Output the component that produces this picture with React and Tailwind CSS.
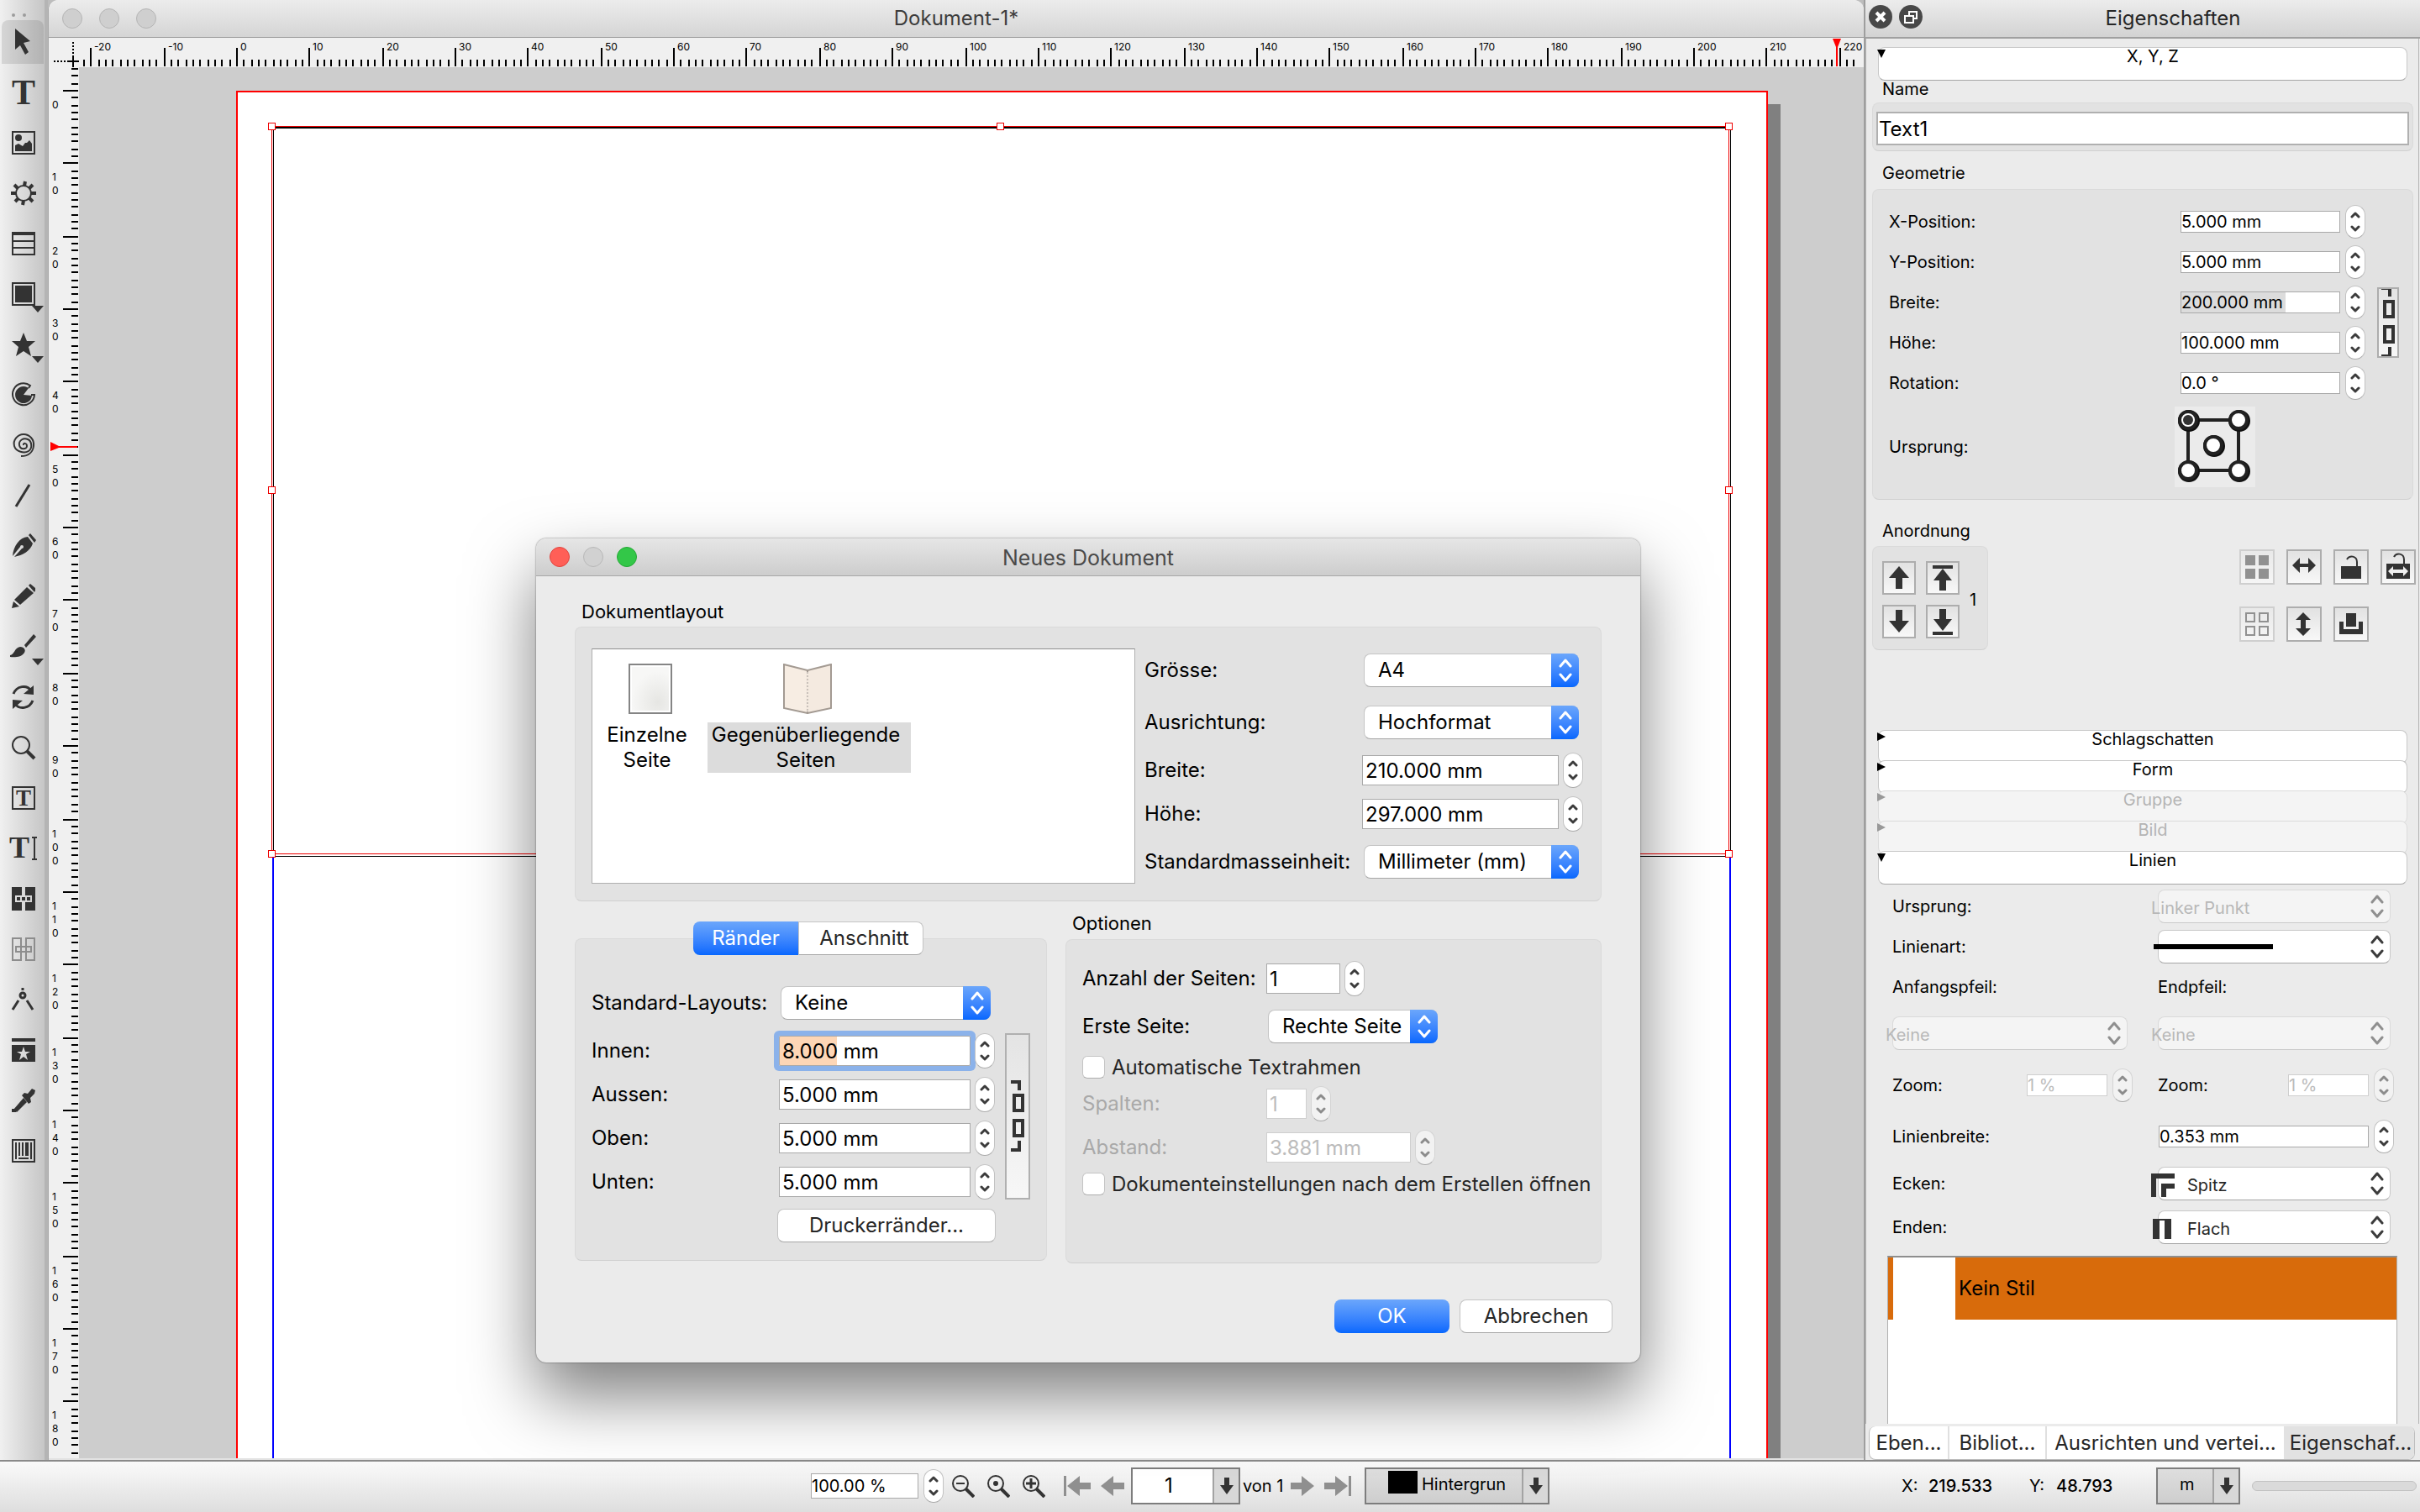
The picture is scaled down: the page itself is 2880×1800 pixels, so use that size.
import { useId, useState } from 'react';

// Pixels per millimetre on the canvas and the rulers.
const MM = 8.67;
const ORIGIN_X = 188;
const ORIGIN_Y = 28;

const snap = (v) => Math.round(v / 2) * 2;

const INK = '#333';

/* ---------- small controls ---------- */

const Chevrons = ({ className = '', tall = false }) => (
  <svg
    viewBox={tall ? '0 0 16 32' : '0 0 12 30'}
    className={`${tall ? 'w-4 h-8' : 'w-3 h-[30px]'} ${className}`}
    fill="none"
    stroke="currentColor"
    strokeWidth="3"
    strokeLinecap="round"
    strokeLinejoin="round"
  >
    {tall ? <path d="M2 11 8 4l6 7M2 21l6 7 6-7" /> : <path d="M2 9l4-4 4 4M2 21l4 4 4-4" />}
  </svg>
);

const Stepper = ({ label, disabled, small }) => (
  <span
    className={`relative shrink-0 flex flex-col w-6 rounded-xl border border-[#c2c2c2] border-b-[#a8a8a8] ${
      small ? 'h-10' : 'h-[42px]'
    } ${disabled ? 'bg-[#f2f2f2] text-[#8c8c8c] border-[#d4d4d4]' : 'bg-white text-[#3c3c3c]'}`}
  >
    <button type="button" disabled={disabled} aria-label={`${label} erhöhen`} className="flex-1" />
    <button type="button" disabled={disabled} aria-label={`${label} verringern`} className="flex-1" />
    <Chevrons className="absolute inset-0 m-auto pointer-events-none" />
  </span>
);

const NumberField = ({ id, label, value, width, disabled, small, className = '' }) => {
  const [text, setText] = useState(value);
  return (
    <span className={`flex items-center ${small ? 'gap-[6px]' : 'gap-[5px]'}`}>
      <input
        id={id}
        aria-label={id ? undefined : label}
        value={text}
        onChange={(e) => setText(e.target.value)}
        disabled={disabled}
        className={`min-w-0 border outline-none ${width} ${
          small ? 'h-[26px] text-xl leading-6 px-0' : 'h-9 text-2xl leading-8 px-[3px]'
        } ${disabled ? 'border-[#cfcfcf] text-[#bcbcbc]' : 'border-[#a9a9a9] text-black'} ${className || 'bg-white'}`}
      />
      <Stepper label={label} disabled={disabled} small={small} />
    </span>
  );
};

const BlueSelect = ({ id, width, children }) => (
  <span className={`relative flex h-10 ml-[2px] ${width}`}>
    <select
      id={id}
      className="appearance-none w-full rounded-lg border border-[#c4c4c4] border-b-[#a6a6a6] bg-white pl-4 pr-9 text-2xl leading-8 text-black outline-none"
    >
      <option>{children}</option>
    </select>
    <span className="absolute right-0 inset-y-0 w-[33px] rounded-r-lg bg-linear-to-b from-[#6ba6fb] to-[#0567fe] flex items-center justify-center text-white pointer-events-none">
      <Chevrons tall />
    </span>
  </span>
);

// The palette selects start their text a little left of the box.
const PaletteSelect = ({ id, label, disabled, icon, children }) => (
  <span className="relative flex-1 flex h-10">
    <span
      className={`absolute inset-y-0 right-0 left-2 rounded-lg border ${
        disabled ? 'bg-[#f4f4f4] border-[#dadada] border-b-[#cacaca]' : 'bg-white border-[#c8c8c8] border-b-[#a6a6a6]'
      }`}
    />
    {icon && <span className="absolute left-0 inset-y-0 flex items-center">{icon}</span>}
    <select
      id={id}
      aria-label={id ? undefined : label}
      disabled={disabled}
      className={`relative appearance-none w-full bg-transparent text-xl leading-6 pt-1 outline-none opacity-100 ${
        icon ? 'pl-[43px]' : 'pl-0'
      } ${disabled ? 'text-[#b8b8b8]' : 'text-[#262626]'}`}
    >
      <option>{children}</option>
    </select>
    <Chevrons
      tall
      className={`absolute right-2 inset-y-0 my-auto pointer-events-none ${disabled ? 'text-[#8f8f8f]' : 'text-[#3c3c3c]'}`}
    />
  </span>
);

const Group = ({ className = '', children }) => (
  <div className={`rounded-lg border border-[#dadada] border-b-[#d0d0d0] bg-[#e2e2e2] ${className}`}>{children}</div>
);

const ChainIcon = ({ className }) => (
  <svg viewBox="0 0 18 86" className={className} fill={INK}>
    <path d="M1 0h12v12H9V4H1z" />
    <path fillRule="evenodd" d="M3 16h14v22H3zM7 20v14h6V20z" />
    <path fillRule="evenodd" d="M3 46h14v22H3zM7 50v14h6V50z" />
    <path d="M9 72h4v13H1v-4h8z" />
  </svg>
);

/* ---------- tool bar ---------- */

const starPath = 'M14 0l4 10h10l-8 7 3 11-9-6-9 6 3-11-8-7h10z';

const TOOLS = [
  { name: 'Objekt auswählen', active: true, art: <path fill={INK} d="M4-2l18 15-8 2 6 11-4 3-6-11-6 5z" /> },
  { name: 'Textrahmen', art: <text x="14" y="28" textAnchor="middle" fontSize="42" fontWeight="bold" fill={INK} fontFamily="Liberation Serif, serif">T</text> },
  {
    name: 'Bildrahmen',
    art: (
      <g fill={INK}>
        <rect x="1" y="1" width="26" height="26" fill="none" stroke={INK} strokeWidth="2" />
        <circle cx="8" cy="8" r="4" />
        <path d="M4 24v-7l4-2 5 3 3-4h2l3-3 3 4v9z" />
      </g>
    ),
  },
  {
    name: 'Renderrahmen',
    art: (
      <g stroke={INK} fill="none" strokeWidth="2">
        <circle cx="14" cy="14" r="9" />
        <path strokeWidth="4" d="M15 5l1-5M14 23l-1 5M5 14H-1M23 14h6M7 8L3 4M21 20l4 4M21 8l4-4M8 20l-4 4" />
      </g>
    ),
  },
  {
    name: 'Tabelle',
    art: (
      <g stroke={INK} fill="none" strokeWidth="2">
        <path d="M1 2v25h26V2M1 11h26M1 19h26" />
        <path strokeWidth="4" d="M0 2h28" />
      </g>
    ),
  },
  {
    name: 'Form',
    menu: true,
    art: (
      <g fill={INK}>
        <rect x="1" y="1" width="26" height="26" fill="none" stroke={INK} strokeWidth="2" />
        <rect x="4" y="4" width="20" height="20" />
      </g>
    ),
  },
  { name: 'Polygon', menu: true, art: <path fill={INK} d={starPath} /> },
  {
    name: 'Bogen',
    art: (
      <g>
        <path fill={INK} d="M14 14L20 6A10 10 0 1 0 24 15z" />
        <path fill="none" stroke={INK} strokeWidth="2" d="M20 6L22 3A13 13 0 1 0 27 14h-4" />
      </g>
    ),
  },
  {
    name: 'Spirale',
    art: <path fill="none" stroke={INK} strokeWidth="2" d="M14 14c-1-3 4-3 4 1s-8 5-9-1 5-9 10-7 6 11 1 14-15 1-17-6S7 1 14 1s13 6 12 14-7 12-15 12" />,
  },
  { name: 'Linie', art: <path stroke={INK} strokeWidth="3" d="M5 27L21 1" /> },
  {
    name: 'Bézierkurve',
    art: (
      <g fill={INK}>
        <path fillRule="evenodd" d="M1 26C2 14 9 4 19 3l6 8c-3 9-12 14-22 16l9-10a2 2 0 1 0-2-2z" />
        <path d="M20 1l2-2 7 8-2 3z" />
      </g>
    ),
  },
  {
    name: 'Freihandlinie',
    art: (
      <g fill={INK}>
        <path d="M3 18L18 3l8 7-16 14z" />
        <path d="M0 28l2-8 7 6zM20 1l2-2 6 5v3l-1 2z" />
      </g>
    ),
  },
  {
    name: 'Kalligrafielinie',
    menu: true,
    art: (
      <g fill={INK}>
        <path d="M-2 24c5 0 5-9 12-10 5 0 7 4 5 7-3 5-11 6-17 5z" />
        <path d="M15 12L26-1l3 3-12 13z" />
      </g>
    ),
  },
  {
    name: 'Objekt drehen',
    art: (
      <g fill="none" stroke={INK} strokeWidth="3">
        <path d="M2 10C6 0 18-1 23 6M25 18C21 28 9 29 4 22" />
        <path fill={INK} stroke="none" d="M26 0v11l-12-1zM1 28V17l12 1z" />
      </g>
    ),
  },
  {
    name: 'Zoom',
    art: (
      <g fill="none" stroke={INK} strokeWidth="2">
        <circle cx="11" cy="11" r="10" />
        <path strokeWidth="4" d="M18 18l9 9" />
      </g>
    ),
  },
  {
    name: 'Textrahmen bearbeiten',
    art: (
      <g>
        <rect x="1" y="1" width="26" height="26" fill="none" stroke={INK} strokeWidth="2" />
        <text x="14" y="23" textAnchor="middle" fontSize="27" fontWeight="bold" fill={INK} fontFamily="Liberation Serif, serif">T</text>
      </g>
    ),
  },
  {
    name: 'Text mit Texteditor bearbeiten',
    art: (
      <g>
        <text x="9" y="25" textAnchor="middle" fontSize="36" fontWeight="bold" fill={INK} fontFamily="Liberation Serif, serif">T</text>
        <path fill="none" stroke={INK} strokeWidth="2" d="M24 1h6M24 27h6M27 1v26" />
      </g>
    ),
  },
  {
    name: 'Textrahmen verketten',
    art: (
      <g fill={INK}>
        <path d="M0 0h12v10H4v8h8v10H0zM28 0H16v10h8v8h-8v10h12z" />
        <path d="M6 12h4v4H6zM12 12h4v4h-4zM18 12h4v4h-4z" />
      </g>
    ),
  },
  {
    name: 'Textrahmenverkettung lösen',
    art: (
      <g fill="none" stroke="#8d8d8d" strokeWidth="2">
        <rect x="1" y="1" width="10" height="26" />
        <rect x="17" y="1" width="10" height="26" />
        <rect x="5" y="11" width="18" height="6" />
      </g>
    ),
  },
  {
    name: 'Messungen',
    art: (
      <g fill="none" stroke={INK} strokeWidth="3">
        <circle cx="13" cy="9" r="3" />
        <path d="M13 0v3M8 15L1 26M18 15l7 11" />
      </g>
    ),
  },
  {
    name: 'Objekteigenschaften kopieren',
    art: (
      <g fill={INK}>
        <rect width="28" height="4" />
        <path fillRule="evenodd" d="M0 8h28v20H0zM14 10l-2 6H6l5 3-2 7 5-4 5 4-2-7 5-3h-6z" />
      </g>
    ),
  },
  {
    name: 'Pipette',
    art: (
      <g fill={INK}>
        <path d="M2 25L14 11l4 5L6 28z" />
        <path d="M12 8l3-3 4 1 5-6 4 2-1 4-5 5 1 5-3 2zM0 24h5v4H0z" />
      </g>
    ),
  },
  {
    name: 'Barcode',
    art: (
      <g fill={INK}>
        <rect x="1" y="1" width="26" height="26" fill="none" stroke={INK} strokeWidth="2" />
        <path d="M4 4h2v20H4zM8 4h2v16H8zM12 4h2v16h-2zM16 4h4v16h-4zM22 4h2v20h-2zM8 22h12v2H8z" />
      </g>
    ),
  },
];

const ToolBar = () => (
  <nav className="w-[57px] shrink-0 bg-linear-to-r from-[#f0f0f0] to-[#c6c6c6] border-r-4 border-[#b4b4b4] pr-px">
    <div className="h-6 flex items-center gap-2 pl-[14px] pt-3">
      <span className="w-1 h-1 rounded-full bg-[#9c9c9c]" />
      <span className="w-1 h-1 rounded-full bg-[#9c9c9c] ml-px" />
    </div>
    <div className="flex flex-col gap-2">
      {TOOLS.map(({ name, active, menu, art }) => (
        <button
          key={name}
          type="button"
          aria-label={name}
          className={`relative ml-[2px] h-[52px] pl-3 flex items-center ${active ? 'rounded-t-lg bg-black/10' : ''}`}
        >
          <svg viewBox="0 0 28 28" className="w-7 h-7 overflow-visible">{art}</svg>
          {menu && (
            <svg viewBox="0 0 14 8" className="absolute right-0 bottom-1 w-[14px] h-2" fill={INK}>
              <path d="M0 0h14L7 8z" />
            </svg>
          )}
        </button>
      ))}
    </div>
  </nav>
);

/* ---------- rulers and canvas ---------- */

const range = (from, to) => Array.from({ length: to - from + 1 }, (_, i) => from + i);

const RulerX = () => (
  <svg className="flex-1 min-w-0 h-[35px] bg-[#f0f0f0]" fontSize="12" fontFamily="Inter, sans-serif">
    {range(-21, 222).map((mm) => {
      const x = snap(ORIGIN_X + mm * MM);
      const major = mm % 10 === 0;
      return (
        <g key={mm}>
          <rect x={x - 1} y={major ? 12 : 26} width="2" height={major ? 22 : 8} />
          {major && <text x={x + 4} y="15">{mm}</text>}
        </g>
      );
    })}
    <path fill="red" d="M2087 1h10l-4 10v23h-2V11z" />
  </svg>
);

const RulerY = () => (
  <svg className="w-9 shrink-0 bg-[#f0f0f0]" fontSize="12" fontFamily="Inter, sans-serif">
    {range(-3, 187).map((mm) => {
      const y = snap(ORIGIN_Y + mm * MM);
      const major = mm % 10 === 0;
      return (
        <g key={mm}>
          <rect x={major ? 17 : 27} y={y - 1} width={major ? 18 : 8} height="2" />
          {major && String(mm).split('').map((d, i) => (
            <text key={i} x="4" y={y + 21 + i * 16}>{d}</text>
          ))}
        </g>
      );
    })}
    <path fill="red" d="M2 446l10 5h22v2H12l-10 4z" />
  </svg>
);

const Canvas = () => {
  const left = Math.round(ORIGIN_X + 5 * MM);
  const right = Math.round(ORIGIN_X + 205 * MM);
  const top = Math.round(ORIGIN_Y + 5 * MM) + 1;
  const bottom = Math.round(ORIGIN_Y + 105 * MM);
  const midX = Math.round((left + right) / 2);
  const midY = Math.round((top + bottom) / 2);
  const w = 210 * MM;
  const h = 297 * MM;
  const handles = [
    [left, top], [midX, top], [right, top],
    [left, midY], [right, midY],
    [left, bottom], [midX, bottom], [right, bottom],
  ];
  return (
    <div className="relative flex-1 min-w-0 bg-[#cdcdcd]">
      <svg className="absolute inset-0 w-full h-full" fill="none" shapeRendering="crispEdges">
        <rect x={ORIGIN_X + 16} y={ORIGIN_Y + 16} width={w} height={h} fill="#808080" />
        <rect x={ORIGIN_X} y={ORIGIN_Y + 1} width={w} height={h} fill="#fff" stroke="#f00" strokeWidth="2" />
        <rect x={left} y={top} width={right - left} height={h - 10 * MM} stroke="#00f" strokeWidth="2" />
        <rect x={left - 3} y={top - 3} width={right - left + 6} height={bottom - top + 6} fill="#fff" />
        <path stroke="#000" d={`M${left + 1} ${top}V${bottom + 1}H${right + 1}V${top}`} transform="translate(-.5 .5)" />
        <path stroke="#000" strokeWidth="2" d={`M${left} ${top}H${right}`} />
        <rect x={left - 2} y={top - 2} width={right - left} height={bottom - top} stroke="#e00" transform="translate(.5 .5)" />
        {handles.map(([x, y]) => (
          <rect key={`${x}-${y}`} x={x - 6} y={y - 6} width="8" height="8" fill="#fff" stroke="#e00" transform="translate(.5 .5)" />
        ))}
      </svg>
    </div>
  );
};

const DocumentWindow = () => (
  <section className="flex-1 min-w-0 flex flex-col rounded-t-xl border-l border-[#a8a8a8] bg-[#f0f0f0] overflow-hidden">
    <header className="flex items-center h-[45px] pl-4 bg-linear-to-b from-[#ececec] to-[#d5d5d5] border-b border-[#9c9c9c]">
      <span className="flex gap-5 w-32">
        {['Schliessen', 'Minimieren', 'Maximieren'].map((n) => (
          <button key={n} type="button" aria-label={n} className="w-6 h-6 rounded-full border border-[#b4b4b4] bg-[#cfcfcf]" />
        ))}
      </span>
      <h1 className="flex-1 pr-36 text-center text-2xl leading-8 text-[#3c3c3c]">Dokument-1*</h1>
    </header>
    <div className="flex">
      <svg className="w-9 h-[35px] shrink-0" fill="none" stroke="#000" strokeWidth="2">
        <path strokeDasharray="2 2" d="M29 5v18M6 28h17" />
        <path d="M29 21v14M22 28h14" />
      </svg>
      <RulerX />
    </div>
    <div className="flex-1 min-h-0 flex border-b-2 border-[#e2e2e2]">
      <RulerY />
      <Canvas />
    </div>
  </section>
);

/* ---------- dialog ---------- */

const DialogRow = ({ label, tall, disabled, labelWidth = 'w-[259px]', children }) => {
  const id = useId();
  return (
    <div className={`flex items-center ${tall ? 'h-[62px]' : 'h-[52px]'}`}>
      <label htmlFor={id} className={`shrink-0 ${labelWidth} ${disabled ? 'text-[#a9a9a9]' : ''}`}>{label}</label>
      {children(id)}
    </div>
  );
};

const MARGINS = [
  { label: 'Innen:', value: '8.000 mm', focus: true },
  { label: 'Aussen:', value: '5.000 mm' },
  { label: 'Oben:', value: '5.000 mm' },
  { label: 'Unten:', value: '5.000 mm' },
];

const Check = ({ children }) => (
  <label className="flex items-center gap-2 h-[35px] text-[#262626]">
    <input type="checkbox" className="appearance-none w-[27px] h-[27px] rounded-md border border-[#c4c4c4] border-b-[#adadad] bg-white" />
    {children}
  </label>
);

const NewDocumentDialog = () => (
  <div
    role="dialog"
    aria-label="Neues Dokument"
    className="absolute left-[638px] top-[641px] w-[1314px] rounded-xl bg-[#ebebeb] text-2xl leading-8 text-black shadow-[0_0_2px_rgba(0,0,0,0.6),0_40px_80px_rgba(0,0,0,0.5)]"
  >
    <header className="flex items-center h-[45px] px-4 rounded-t-xl border-b border-[#a8a8a8] bg-linear-to-b from-[#e6e6e6] to-[#cdcdcd]">
      <span className="flex gap-4 w-32">
        <button type="button" aria-label="Schliessen" className="w-6 h-6 rounded-full border border-[#e0443e] bg-[#ff5f57]" />
        <button type="button" aria-label="Minimieren" className="w-6 h-6 rounded-full border border-[#b8b8b8] bg-[#d1d1d1]" />
        <button type="button" aria-label="Maximieren" className="w-6 h-6 rounded-full border border-[#24a835] bg-[#33c748]" />
      </span>
      <h2 className="flex-1 pt-[2px] pr-32 text-center text-[25px] text-[#4a4a4a]">Neues Dokument</h2>
    </header>

    <div className="px-[46px] pt-[29px]">
      <h3 className="pl-2 mb-[5px] text-[22px] leading-[26px]">Dokumentlayout</h3>
      <Group className="flex gap-[11px] pl-[19px] pt-5 pb-[15px]">
        <div className="flex items-start my-[5px] w-[647px] border border-[#b0b0b0] border-t-[#8e8e8e] bg-white pt-[17px]">
          <button type="button" className="flex flex-col items-center gap-[10px] w-[130px] leading-[30px]">
            <svg viewBox="0 0 52 60" className="w-[52px] h-[60px] ml-2">
              <defs>
                <radialGradient id="paper" cx="0.7" cy="0.8" r="0.7">
                  <stop offset="0" stopColor="#e6e6e3" />
                  <stop offset="1" stopColor="#f7f7f6" />
                </radialGradient>
              </defs>
              <rect x="1" y="1" width="50" height="58" fill="#fff" stroke="#858585" strokeWidth="2" />
              <rect x="4" y="4" width="44" height="52" fill="url(#paper)" />
            </svg>
            <span>Einzelne<br />Seite</span>
          </button>
          <button type="button" className="flex flex-col items-center gap-[10px] ml-[7px] w-[242px] leading-[30px]">
            <svg viewBox="0 0 58 60" className="w-[58px] h-[60px] mr-1" stroke="#a39a92" strokeWidth="2">
              <path fill="#f7ede3" d="M1 1l28 7v51L1 53z" />
              <path fill="#f4eae0" d="M57 1L29 8v51l28-6z" />
              <path stroke="#f4eae0" strokeWidth="4" d="M29 10v47" />
              <path stroke="#c9c1ba" strokeDasharray="2 2" d="M29 10v47" />
            </svg>
            <span className="w-full pr-2 bg-[#dcdcdc]">Gegenüberliegende<br />Seiten</span>
          </button>
        </div>
        <div>
          <DialogRow label="Grösse:" tall>{(id) => <BlueSelect id={id} width="w-[256px]">A4</BlueSelect>}</DialogRow>
          <DialogRow label="Ausrichtung:" tall>{(id) => <BlueSelect id={id} width="w-[256px]">Hochformat</BlueSelect>}</DialogRow>
          <DialogRow label="Breite:">{(id) => <NumberField id={id} label="Breite" value="210.000 mm" width="w-[234px]" />}</DialogRow>
          <DialogRow label="Höhe:">{(id) => <NumberField id={id} label="Höhe" value="297.000 mm" width="w-[234px]" />}</DialogRow>
          <DialogRow label="Standardmasseinheit:" tall>{(id) => <BlueSelect id={id} width="w-[256px]">Millimeter (mm)</BlueSelect>}</DialogRow>
        </div>
      </Group>

      <div className="flex gap-[22px] pt-[13px]">
        <div className="w-[562px] pt-[11px]">
          <div role="tablist" className="relative ml-[141px] w-[274px] h-10 flex -mb-5">
            <button type="button" role="tab" aria-selected="true" className="w-[125px] rounded-l-lg bg-linear-to-b from-[#6ba6fb] to-[#0567fe] text-white">Ränder</button>
            <button type="button" role="tab" aria-selected="false" className="flex-1 pl-2 rounded-r-lg border border-[#c4c4c4] border-b-[#a6a6a6] bg-white text-[#262626]">Anschnitt</button>
          </div>
          <Group className="pl-[19px] pt-[45px] pb-[21px]">
            <DialogRow label="Standard-Layouts:" tall labelWidth="w-[223px]">
              {(id) => <BlueSelect id={id} width="w-[250px]">Keine</BlueSelect>}
            </DialogRow>
            <div className="flex items-center gap-3">
              <div>
                {MARGINS.map(({ label, value, focus }) => (
                  <DialogRow key={label} label={label} labelWidth="w-[223px]">
                    {(id) => (
                      <NumberField
                        id={id}
                        label={label.replace(':', '')}
                        value={value}
                        width="w-[228px]"
                        className={focus ? 'ring-[6px] ring-[#8bb2ea] rounded-xs bg-[linear-gradient(to_right,#fdd6b6_68px,#fff_68px)]' : ''}
                      />
                    )}
                  </DialogRow>
                ))}
              </div>
              <button type="button" aria-label="Alle Ränder gleich" className="w-[30px] h-[198px] flex items-center justify-center border-2 border-[#b0b0b0] bg-linear-to-b from-[#e4e4e4] to-[#f7f7f7]">
                <ChainIcon className="w-[18px] h-[86px]" />
              </button>
            </div>
            <button type="button" className="ml-[221px] mt-[6px] w-[260px] h-10 rounded-lg border border-[#c4c4c4] border-b-[#a6a6a6] bg-white text-[#262626]">Druckerränder...</button>
          </Group>
        </div>

        <div className="flex-1">
          <h3 className="pl-2 mb-[6px] text-[22px] leading-[26px]">Optionen</h3>
          <Group className="pl-[19px] pt-5 pb-[76px]">
            <DialogRow label="Anzahl der Seiten:" labelWidth="w-[219px]">
              {(id) => <NumberField id={id} label="Anzahl der Seiten" value="1" width="w-[88px]" />}
            </DialogRow>
            <DialogRow label="Erste Seite:" tall labelWidth="w-[219px]">
              {(id) => <BlueSelect id={id} width="w-[202px]">Rechte Seite</BlueSelect>}
            </DialogRow>
            <Check>Automatische Textrahmen</Check>
            <DialogRow label="Spalten:" disabled labelWidth="w-[219px]">
              {(id) => <NumberField id={id} label="Spalten" value="1" width="w-12" disabled />}
            </DialogRow>
            <DialogRow label="Abstand:" disabled labelWidth="w-[219px]">
              {(id) => <NumberField id={id} label="Abstand" value="3.881 mm" width="w-[172px]" disabled />}
            </DialogRow>
            <Check>Dokumenteinstellungen nach dem Erstellen öffnen</Check>
          </Group>
        </div>
      </div>
    </div>

    <footer className="flex justify-end gap-3 pr-[33px] pt-[43px] pb-[35px]">
      <button type="button" className="w-[137px] h-10 rounded-lg bg-linear-to-b from-[#6ba6fb] to-[#0567fe] text-white">OK</button>
      <button type="button" className="w-[182px] h-10 rounded-lg border border-[#c4c4c4] border-b-[#a6a6a6] bg-white text-[#262626]">Abbrechen</button>
    </footer>
  </div>
);

/* ---------- properties palette ---------- */

const Section = ({ title, open, disabled }) => (
  <button
    type="button"
    disabled={disabled}
    aria-expanded={!!open}
    className={`relative block mx-[7px] h-10 -mb-1 rounded-lg border text-center text-xl leading-5 pb-5 ${
      disabled ? 'bg-[#f4f4f4] border-[#dcdcdc] text-[#b4b4b4]' : 'bg-white border-[#c8c8c8] border-b-[#a6a6a6] text-black'
    }`}
  >
    <svg viewBox="0 0 10 10" className="absolute -left-[2px] top-[2px] w-[10px] h-[10px]" fill={disabled ? '#999' : '#000'}>
      <path d={open ? 'M0 0h10L5 10z' : 'M0 0l10 5-10 5z'} />
    </svg>
    <span className="pl-6">{title}</span>
  </button>
);

const GEOMETRY = [
  { label: 'X-Position:', value: '5.000 mm' },
  { label: 'Y-Position:', value: '5.000 mm' },
  { label: 'Breite:', value: '200.000 mm', marked: true },
  { label: 'Höhe:', value: '100.000 mm' },
  { label: 'Rotation:', value: '0.0 °' },
];

const GeometryRow = ({ label, value, marked }) => {
  const id = useId();
  return (
    <div className="flex items-center h-12">
      <label htmlFor={id} className="flex-1">{label}</label>
      <NumberField
        id={id}
        label={label.replace(':', '')}
        value={value}
        width="w-[190px]"
        small
        className={marked ? 'bg-[linear-gradient(to_right,#dcdcdc_124px,#fff_124px)]' : ''}
      />
    </div>
  );
};

const OriginPicker = () => (
  <svg viewBox="0 0 96 96" className="w-24 h-24 bg-[#ebebeb]" stroke="#222" strokeWidth="4" fill="#fff">
    <rect x="16" y="16" width="60" height="60" fill="none" />
    {[[17, 17], [77, 17], [47, 47], [17, 77], [77, 77]].map(([x, y]) => (
      <g key={`${x}-${y}`}>
        <circle cx={x} cy={y} r="11" fill="#111" stroke="#111" />
        <circle cx={x - 1} cy={y - 1} r="10" />
      </g>
    ))}
    <circle cx="16" cy="16" r="6" fill="#333" stroke="none" />
  </svg>
);

const ToolSquare = ({ label, size = 'w-[42px] h-[42px]', faded, children }) => (
  <button
    type="button"
    aria-label={label}
    disabled={faded}
    className={`flex items-center justify-center border-2 bg-linear-to-b ${size} ${
      faded ? 'border-[#cfcfcf] from-[#e9e9e9] to-[#f5f5f5]' : 'border-[#adadad] from-[#e2e2e2] to-[#f8f8f8]'
    }`}
  >
    <svg viewBox="0 0 28 28" className="w-7 h-7 overflow-visible" fill={faded ? '#919191' : INK}>{children}</svg>
  </button>
);

const upArrow = 'M14 0l12 14h-8v13h-8V14H2z';
const downArrow = 'M14 27L2 13h8V0h8v13h8z';

const Palette = () => {
  const id = useId();
  return (
    <aside className="w-[662px] shrink-0 flex flex-col bg-[#ebebeb] border-l-2 border-[#9e9e9e] text-xl leading-5 text-black">
      <header className="flex items-center h-[46px] pl-1 bg-linear-to-b from-[#ececec] to-[#d3d3d3] border-b-2 border-[#a0a0a0]">
        <span className="flex gap-2 w-20 -mt-1">
          <button type="button" aria-label="Palette schliessen">
            <svg viewBox="0 0 28 28" className="w-7 h-7">
              <circle cx="14" cy="14" r="14" fill="#484848" />
              <path stroke="#fff" strokeWidth="4" d="M9 9l10 10M19 9L9 19" />
            </svg>
          </button>
          <button type="button" aria-label="Palette ablösen">
            <svg viewBox="0 0 28 28" className="w-7 h-7" fill="none">
              <circle cx="14" cy="14" r="14" fill="#484848" />
              <path stroke="#fff" strokeWidth="2" d="M12 12V8h9v8h-3M7 13h10v8H7z" />
            </svg>
          </button>
        </span>
        <h2 className="flex-1 pr-3 text-center text-2xl leading-8 text-[#262626]">Eigenschaften</h2>
      </header>

      <div className="flex-1 min-h-0 flex flex-col pl-[7px] pr-[6px] pt-[10px] border-x border-[#b4b4b4] mr-px">
        <div className="flex flex-col mb-1"><Section title="X, Y, Z" open /></div>

        <label htmlFor={`${id}-name`} className="pl-3 mb-[6px]">Name</label>
        <Group className="px-1 pt-[10px] pb-[6px]">
          <input id={`${id}-name`} defaultValue="Text1" className="block w-full h-10 px-px border-2 border-[#b0b0b0] bg-white text-2xl leading-8 outline-none" />
        </Group>

        <h3 className="pl-3 mt-4 mb-[9px]">Geometrie</h3>
        <Group className="pl-[19px] pt-[14px] pb-[10px]">
          <div className="flex">
            <div className="flex-1">{GEOMETRY.map((row) => <GeometryRow key={row.label} {...row} />)}</div>
            <button type="button" aria-label="Seitenverhältnis beibehalten" className="self-center mt-12 ml-[14px] mr-4 w-[26px] h-[84px] flex items-center justify-center border-2 border-[#adadad] bg-linear-to-b from-[#e4e4e4] to-[#f7f7f7] overflow-hidden">
              <ChainIcon className="w-[18px] h-[86px] shrink-0" />
            </button>
          </div>
          <div className="flex items-center h-[104px]">
            <span className="w-[340px]">Ursprung:</span>
            <OriginPicker />
          </div>
        </Group>

        <h3 className="pl-3 mt-[27px] mb-2">Anordnung</h3>
        <div className="flex justify-between items-start -mr-[3px]">
          <Group className="flex items-center gap-3 w-[138px] h-[124px] pl-[11px] pt-1">
            <div className="grid grid-cols-2 gap-3">
              <ToolSquare label="Nach oben" size="w-10 h-10"><path d={upArrow} /></ToolSquare>
              <ToolSquare label="Ganz nach oben" size="w-10 h-10"><path d="M2-1h24v4H2zM14 3l11 14h-7v12h-8V17H3z" /></ToolSquare>
              <ToolSquare label="Nach unten" size="w-10 h-10"><path d={downArrow} /></ToolSquare>
              <ToolSquare label="Ganz nach unten" size="w-10 h-10"><path d="M2 26h24v4H2zM14 25L3 11h7V-1h8v12h7z" /></ToolSquare>
            </div>
            <span>1</span>
          </Group>
          <div className="grid grid-cols-4 gap-x-[14px] gap-y-[26px] pt-1">
            <ToolSquare label="Gruppieren" faded><path d="M0 0h12v12H0zM16 0h12v12H16zM0 16h12v12H0zM16 16h12v12H16z" /></ToolSquare>
            <ToolSquare label="Horizontal spiegeln"><path d="M0 12L9 3v7h10V3l9 9-9 9v-7H9v7z" /></ToolSquare>
            <ToolSquare label="Objekt sperren"><path d="M2 13h24v15H2z" /><path fill="none" stroke={INK} strokeWidth="2" d="M9 5c3-6 12-4 12 3v6" /></ToolSquare>
            <ToolSquare label="Grösse sperren"><path fillRule="evenodd" d="M0 10h28v18H0zM2 19l6 6v-4h12v4l6-6-6-6v4H8v-4z" /><path fill="none" stroke={INK} strokeWidth="2" d="M9 2c3-6 12-4 12 3v6" /></ToolSquare>
            <ToolSquare label="Gruppierung aufheben" faded><path fillRule="evenodd" d="M0 0h12v12H0zM2 2v8h8V2zM16 0h12v12H16zM18 2v8h8V2zM0 16h12v12H0zM2 18v8h8v-8zM16 16h12v12H16zM18 18v8h8v-8z" /></ToolSquare>
            <ToolSquare label="Vertikal spiegeln"><path d="M13 0l9 9h-6v10h6l-9 9-9-9h6V9H4z" /></ToolSquare>
            <ToolSquare label="Drucken"><path d="M8 1h12v16H8z" /><path d="M0 11h5v9h18v-9h5v15H0z" /></ToolSquare>
          </div>
        </div>

        <div className="flex flex-col mt-[95px] mb-1">
          <Section title="Schlagschatten" />
          <Section title="Form" />
          <Section title="Gruppe" disabled />
          <Section title="Bild" disabled />
          <Section title="Linien" open />
        </div>

        <div className="pl-6 pr-[27px] pt-[2px]">
          <div className="flex items-center h-12">
            <label htmlFor={`${id}-base`} className="w-[308px]">Ursprung:</label>
            <PaletteSelect id={`${id}-base`} disabled>Linker Punkt</PaletteSelect>
          </div>
          <div className="flex items-center h-12">
            <label htmlFor={`${id}-type`} className="w-[308px]">Linienart:</label>
            <PaletteSelect id={`${id}-type`} icon={<span className="w-[142px] h-[6px] ml-[3px] bg-black" />}>{' '}</PaletteSelect>
          </div>
          <div className="flex items-center h-12">
            <span className="w-[316px]">Anfangspfeil:</span>
            <span>Endpfeil:</span>
          </div>
          <div className="flex items-center h-[62px] -ml-2 gap-7">
            <span className="w-[288px] flex"><PaletteSelect label="Anfangspfeil" disabled>Keine</PaletteSelect></span>
            <PaletteSelect label="Endpfeil" disabled>Keine</PaletteSelect>
          </div>
          <div className="flex items-center h-[62px] gap-[30px] -mr-1">
            <span className="w-[286px] flex items-center justify-between">
              <label htmlFor={`${id}-z1`}>Zoom:</label>
              <NumberField id={`${id}-z1`} label="Zoom Anfangspfeil" value="1 %" width="w-24" small disabled />
            </span>
            <span className="flex-1 flex items-center justify-between">
              <label htmlFor={`${id}-z2`}>Zoom:</label>
              <NumberField id={`${id}-z2`} label="Zoom Endpfeil" value="1 %" width="w-24" small disabled />
            </span>
          </div>
          <div className="flex items-center justify-between h-[59px] -mr-1">
            <label htmlFor={`${id}-lw`}>Linienbreite:</label>
            <NumberField id={`${id}-lw`} label="Linienbreite" value="0.353 mm" width="w-[250px]" small />
          </div>
          <div className="flex items-center h-[53px]">
            <label htmlFor={`${id}-join`} className="w-[308px]">Ecken:</label>
            <PaletteSelect
              id={`${id}-join`}
              icon={<svg viewBox="0 0 28 28" className="w-7 h-7 mt-1" fill={INK}><path d="M0 0h28v6H6v22H0zM12 12h16v6H18v10h-6z" /></svg>}
            >
              Spitz
            </PaletteSelect>
          </div>
          <div className="flex items-center h-[52px]">
            <label htmlFor={`${id}-cap`} className="w-[308px]">Enden:</label>
            <PaletteSelect
              id={`${id}-cap`}
              icon={<svg viewBox="0 0 28 28" className="w-7 h-7 mt-1" fill={INK}><path d="M2 2h22v24H2z" /><path fill="#fff" d="M10 4h6v22h-6z" /></svg>}
            >
              Flach
            </PaletteSelect>
          </div>
        </div>

        <ul className="flex-1 min-h-0 mt-[8px] ml-[18px] mr-[19px] border-x border-t-2 border-[#b0b0b0] border-t-[#8e8e8e] bg-white">
          <li className="flex items-center h-[74px] bg-[#d86b0b] pl-[6px] text-2xl leading-8">
            <span className="w-[74px] h-full bg-white mr-[4px]" />
            Kein Stil
          </li>
        </ul>
      </div>

      <div role="tablist" className="flex ml-1 mr-[6px] border-t-0 mt-[3px] h-10 rounded-lg border border-[#bdbdbd] bg-white overflow-hidden text-2xl leading-8 text-[#262626] whitespace-nowrap">
        <button type="button" role="tab" className="w-[95px] border-r-2 border-[#e0e0e0]">Eben...</button>
        <button type="button" role="tab" className="w-[116px] border-r-2 border-[#e0e0e0]">Bibliot...</button>
        <button type="button" role="tab" className="w-[282px]">Ausrichten und vertei...</button>
        <button type="button" role="tab" aria-selected="true" className="flex-1 pl-1 bg-[#e2e2e2]">Eigenschaf...</button>
      </div>
    </aside>
  );
};

/* ---------- status bar ---------- */

const ZoomButton = ({ label, children }) => (
  <button type="button" aria-label={label}>
    <svg viewBox="0 0 28 28" className="w-7 h-7" fill="none" stroke={INK} strokeWidth="2">
      <circle cx="11" cy="11" r="9" />
      <path strokeWidth="4" d="M17 17l10 10" />
      {children}
    </svg>
  </button>
);

const PageButton = ({ label, d, wide }) => (
  <button type="button" aria-label={label}>
    <svg viewBox={wide ? '0 0 32 24' : '0 0 28 24'} className={wide ? 'w-8 h-6' : 'w-7 h-6'} fill="#8f8f8f"><path d={d} /></svg>
  </button>
);

const DropArrow = () => (
  <span className="absolute right-0 inset-y-0 w-[31px] border-l-2 border-[#a3a3a3] bg-[#d8d8d8] flex items-center justify-center pointer-events-none">
    <svg viewBox="0 0 16 20" className="w-4 h-5" fill={INK}><path d="M5 0h6v9h5l-8 11L0 9h5z" /></svg>
  </span>
);

const StatusBar = () => (
  <footer className="shrink-0 flex items-center h-[62px] pl-[965px] pr-1 pb-[2px] border-t-2 border-[#8a8a8a] bg-linear-to-b from-[#fafafa] to-[#dedede] text-xl leading-6 text-black">
    <NumberField label="Zoom" value="100.00 %" width="w-32" small className="h-[30px] bg-white" />
    <div className="flex gap-[14px] ml-[9px]">
      <ZoomButton label="Verkleinern"><path d="M6 11h10" /></ZoomButton>
      <ZoomButton label="Zoom auf 100 %"><circle cx="11" cy="11" r="2" fill={INK} /></ZoomButton>
      <ZoomButton label="Vergrössern"><path strokeWidth="3" d="M5 11h12M11 5v12" /></ZoomButton>
    </div>
    <div className="flex items-center gap-3 ml-[22px]">
      <PageButton wide label="Erste Seite" d="M0 0h3v24H0zM4 12L19 0v8h13v8H19v8z" />
      <PageButton label="Vorherige Seite" d="M0 12L15 0v8h13v8H15v8z" />
    </div>
    <span className="relative ml-2 w-[130px] h-11 flex border-2 border-[#7d7d7d] bg-white">
      <select aria-label="Seite" className="appearance-none w-full bg-transparent pl-[38px] text-2xl leading-8 outline-none"><option>1</option></select>
      <DropArrow />
    </span>
    <span className="ml-[3px] w-[57px] whitespace-nowrap">von 1</span>
    <div className="flex items-center gap-3">
      <PageButton label="Nächste Seite" d="M28 12L13 0v8H0v8h13v8z" />
      <PageButton wide label="Letzte Seite" d="M32 0h-3v24h3zM28 12L13 0v8H0v8h13v8z" />
    </div>
    <span className="relative ml-4 w-[220px] h-11 flex items-center border-2 border-[#7d7d7d] bg-linear-to-b from-[#dedede] to-[#cecece]">
      <span className="absolute left-[26px] top-[2px] w-[35px] h-[27px] bg-black" />
      <select aria-label="Ebene" className="relative appearance-none w-[184px] h-full bg-transparent pl-[66px] pb-1 outline-none"><option>Hintergrun</option></select>
      <DropArrow />
    </span>

    <div className="ml-auto flex items-center">
      <span className="w-8">X:</span>
      <span className="w-[120px] font-medium">219.533</span>
      <span className="w-8">Y:</span>
      <span className="w-[119px] font-medium">48.793</span>
      <span className="relative w-[100px] h-11 flex border-2 border-[#7d7d7d] bg-linear-to-b from-[#dedede] to-[#cecece]">
        <select aria-label="Einheit" className="appearance-none w-full bg-transparent pl-[26px] pb-1 outline-none"><option>m</option></select>
        <DropArrow />
      </span>
      <span role="progressbar" aria-label="Fortschritt" className="ml-[14px] w-[196px] h-3 rounded-full border border-[#c2c2c2] bg-[#dadada]" />
    </div>
  </footer>
);

const App = () => (
  <div className="relative h-screen flex flex-col overflow-hidden bg-[#bdbdbd] font-['Inter',sans-serif]">
    <div className="flex-1 min-h-0 flex">
      <ToolBar />
      <DocumentWindow />
      <Palette />
    </div>
    <StatusBar />
    <NewDocumentDialog />
  </div>
);

export default App;
